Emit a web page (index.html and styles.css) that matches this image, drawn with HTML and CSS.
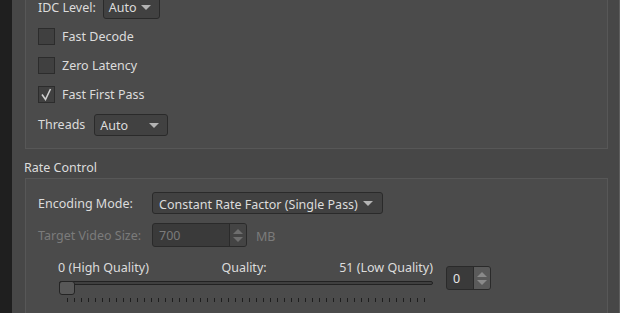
FILE: index.html
```html
<!DOCTYPE html>
<html>
    <head>
        <meta charset="utf-8">
        <title>Encoder Settings</title>
        <link rel="stylesheet" href="styles.css">
    </head>
    <body>
        <div class="painel">
            <div class="grupo grupo-topo">
                <div class="linha">
                    <span class="rotulo">IDC Level:</span>
                    <div class="combo combo-idc"><span>Auto</span><i class="seta"></i></div>
                </div>
                <div class="linha">
                    <span class="caixa"></span>
                    <span class="rotulo">Fast Decode</span>
                </div>
                <div class="linha">
                    <span class="caixa"></span>
                    <span class="rotulo">Zero Latency</span>
                </div>
                <div class="linha">
                    <span class="caixa">
                        <svg width="15" height="15" viewBox="0 0 15 15"><polyline points="3,7.5 6.5,12.5 11.5,2" fill="none" stroke="#cfcfcf" stroke-width="1.6"/></svg>
                    </span>
                    <span class="rotulo">Fast First Pass</span>
                </div>
                <div class="linha linha-threads">
                    <span class="rotulo">Threads</span>
                    <div class="combo combo-threads"><span>Auto</span><i class="seta"></i></div>
                </div>
            </div>

            <div class="titulo-grupo">Rate Control</div>

            <div class="grupo grupo-taxa">
                <div class="campo">
                    <span class="rotulo rotulo-largo">Encoding Mode:</span>
                    <div class="combo combo-modo"><span>Constant Rate Factor (Single Pass)</span><i class="seta"></i></div>
                </div>
                <div class="campo campo-tamanho desativado">
                    <span class="rotulo rotulo-largo">Target Video Size:</span>
                    <div class="spin spin-tamanho">
                        <span class="valor">700</span>
                        <span class="botoes"><i class="cima"></i><i class="baixo"></i></span>
                    </div>
                    <span class="unidade">MB</span>
                </div>
                <div class="qualidade">
                    <div class="deslizador">
                        <div class="legendas">
                            <span>0 (High Quality)</span>
                            <span>Quality:</span>
                            <span>51 (Low Quality)</span>
                        </div>
                        <div class="trilho">
                            <div class="sulco"></div>
                            <div class="pegador"></div>
                        </div>
                        <div class="marcas"></div>
                    </div>
                    <div class="spin spin-crf">
                        <span class="valor">0</span>
                        <span class="botoes"><i class="cima"></i><i class="baixo"></i></span>
                    </div>
                </div>
            </div>
        </div>
    </body>
</html>
```
FILE: styles.css
```css
html, body{
    margin: 0;
    height: 100%;
    overflow: hidden;
    background-color: #1f1f1f;
}
body{
    font-family: 'Noto Sans', 'Open Sans', sans-serif;
    font-size: 12.5px;
    color: #dcdcdc;
}
.painel{
    display: flow-root;
    margin-left: 12px;
    width: 583px;
    height: 100%;
    padding: 0 11px 0 13px;
    background-color: #474747;
    border-right: 1px solid #5e5e5e;
}
.grupo{
    background-color: #4b4b4b;
    border: 1px solid #575757;
    padding-left: 12px;
}
.grupo-topo{
    margin-top: -20px;
    padding-top: 12px;
    padding-bottom: 8px;
}
.linha{
    height: 29px;
    display: flex;
    align-items: center;
}
.linha-threads{
    height: 30px;
    padding-top: 1px;
}
.caixa{
    width: 15px;
    height: 15px;
    margin-right: 7px;
    border: 1px solid #2c2c2c;
    background-color: #404040;
    display: flex;
    align-items: center;
    justify-content: center;
}
.rotulo{
    line-height: 14px;
}
.combo{
    height: 20px;
    margin-left: 7px;
    padding: 0 8px 0 5px;
    display: flex;
    align-items: center;
    justify-content: space-between;
    background-color: #414141;
    border: 1px solid #2a2a2a;
    border-radius: 3px;
    box-sizing: content-box;
}
.combo-idc{
    width: 42px;
}
.combo-threads{
    width: 59px;
    margin-left: 9px;
}
.seta{
    width: 0;
    height: 0;
    border-left: 5px solid transparent;
    border-right: 5px solid transparent;
    border-top: 5px solid #b4b4b4;
}
.titulo-grupo{
    height: 29px;
    line-height: 38px;
    margin-left: -1px;
}
.grupo-taxa{
    height: 200px;
    padding-top: 13px;
}
.grupo-taxa .rotulo, .grupo-taxa .combo span, .grupo-taxa .valor, .unidade{
    padding-top: 2px;
}
.campo{
    display: flex;
    align-items: center;
    height: 22px;
}
.rotulo-largo{
    width: 114px;
}
.combo-modo{
    margin-left: 0;
    width: 215px;
    padding-left: 6px;
}
.combo-modo .seta{
    margin-right: 1px;
}
.campo-tamanho{
    margin-top: 9px;
    height: 24px;
}
.desativado{
    color: #7b7b7b;
}
.spin{
    display: flex;
    height: 22px;
    border: 1px solid #2a2a2a;
    border-radius: 3px;
    background-color: #3a3a3a;
    overflow: hidden;
}
.spin .valor{
    flex: 1;
    padding-left: 6px;
    line-height: 20px;
}
.spin .botoes{
    width: 16px;
    border-left: 1px solid #2a2a2a;
    display: flex;
    flex-direction: column;
    align-items: center;
    justify-content: center;
    gap: 3px;
}
.spin-tamanho{
    width: 93px;
}
.spin-tamanho .botoes{
    background-color: #444444;
}
.cima, .baixo{
    width: 0;
    height: 0;
    border-left: 5px solid transparent;
    border-right: 5px solid transparent;
}
.cima{
    border-bottom: 5px solid #6e6e6e;
}
.baixo{
    border-top: 5px solid #6e6e6e;
}
.unidade{
    margin-left: 9px;
}
.qualidade{
    display: flex;
    align-items: flex-start;
    margin-top: 13px;
    margin-left: 20px;
}
.deslizador{
    width: 375px;
}
.legendas{
    display: flex;
    justify-content: space-between;
    line-height: 15px;
    height: 16px;
}
.trilho{
    position: relative;
    height: 14px;
    margin-left: 1px;
}
.sulco{
    margin-top: 5px;
    height: 2px;
    border: 1px solid #222222;
    border-radius: 2px;
    background-color: #3f3f3f;
}
.pegador{
    position: absolute;
    left: 0;
    top: 0;
    width: 14px;
    height: 12px;
    border: 1px solid #242424;
    border-radius: 3px;
    background-color: #585858;
}
.marcas{
    margin: 3px 0 0 9px;
    width: 358px;
    height: 4px;
    background: repeating-linear-gradient(to right, #1e1e1e 0 1px, transparent 1px 7px);
}
.spin-crf{
    width: 43px;
    margin-left: 13px;
    margin-top: 6px;
    color: #e6e6e6;
}
.spin-crf .botoes{
    background-color: #5a5a5a;
}
.spin-crf .cima{
    border-bottom-color: #8a8a8a;
}
.spin-crf .baixo{
    border-top-color: #8a8a8a;
}
```
